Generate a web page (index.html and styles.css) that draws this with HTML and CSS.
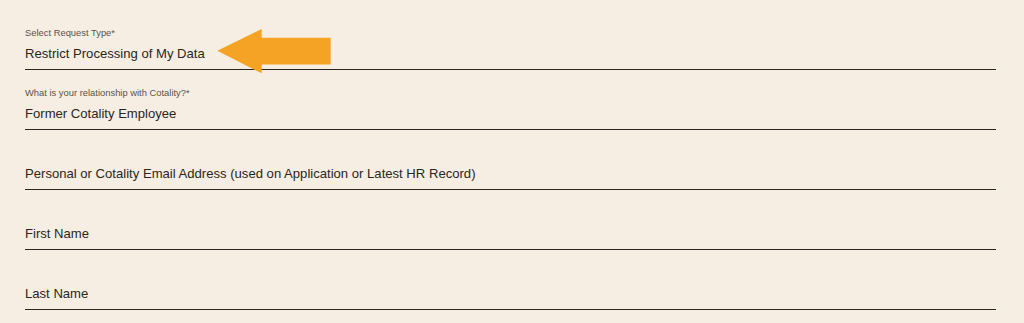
FILE: index.html
```html
<!DOCTYPE html>
<html lang="en">
<head>
<meta charset="utf-8">
<title>Request form</title>
<link rel="stylesheet" href="styles.css">
</head>
<body>
<form class="form">
  <div class="field">
    <span class="label">Select Request Type*</span>
    <span class="value">Restrict Processing of My Data</span>
  </div>
  <div class="field">
    <span class="label">What is your relationship with Cotality?*</span>
    <span class="value">Former Cotality Employee</span>
  </div>
  <div class="field">
    <span class="value">Personal or Cotality Email Address (used on Application or Latest HR Record)</span>
  </div>
  <div class="field">
    <span class="value">First Name</span>
  </div>
  <div class="field">
    <span class="value">Last Name</span>
  </div>
</form>
<svg class="arrow" width="120" height="50" viewBox="212 26 120 50" aria-hidden="true">
  <polygon points="217.3,50.7 261.7,29 261.7,37.7 330.7,37.7 330.7,64.5 261.7,64.5 261.7,73.3" fill="#f5a325"/>
</svg>
</body>
</html>
```

FILE: styles.css
```css
html, body {
  margin: 0;
  padding: 0;
  background: #f6eee3;
}

body {
  position: relative;
  width: 1024px;
  height: 323px;
  overflow: hidden;
  font-family: "Liberation Sans", Arial, sans-serif;
  color: #2b2521;
}

.form {
  margin: 0;
  padding: 10px 0 0 25px;
  width: 971px;
}

.field {
  height: 60px;
  box-sizing: border-box;
  display: flex;
  flex-direction: column;
  justify-content: flex-end;
  padding-bottom: 5px;
  border-bottom: 1.5px solid #2b2521;
}

.label {
  font-size: 9.4px;
  line-height: 12px;
  color: #5a524b;
  margin-bottom: 5px;
}

.value {
  font-size: 13.1px;
  line-height: 20px;
  color: #2b2521;
}

.arrow {
  position: absolute;
  left: 212px;
  top: 26px;
}
```
